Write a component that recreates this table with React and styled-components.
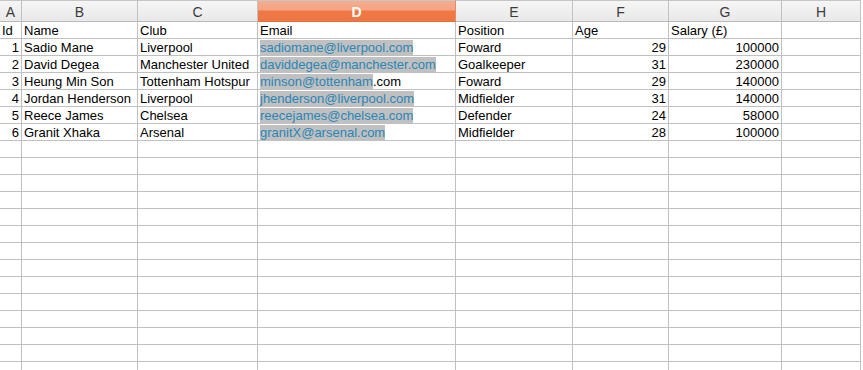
import React from 'react';
import styled, { createGlobalStyle } from 'styled-components';

const GlobalStyle = createGlobalStyle`
  html, body {
    margin: 0;
    padding: 0;
    background: #ffffff;
  }
  body {
    font-family: "Liberation Sans", Arial, sans-serif;
    overflow: hidden;
  }
`;

const widths = [22, 116, 120, 198, 117, 96, 113, 79];
const letters = ['A', 'B', 'C', 'D', 'E', 'F', 'G', 'H'];
const numeric = [false, false, false, false, false, true, true, false];

const rows = [
  ['Id', 'Name', 'Club', 'Email', 'Position', 'Age', 'Salary (£)'],
  [1, 'Sadio Mane', 'Liverpool', { link: 'sadiomane@liverpool.com' }, 'Foward', 29, 100000],
  [2, 'David Degea', 'Manchester United', { link: 'daviddegea@manchester.com' }, 'Goalkeeper', 31, 230000],
  [3, 'Heung Min Son', 'Tottenham Hotspur', { link: 'minson@tottenham', rest: '.com' }, 'Foward', 29, 140000],
  [4, 'Jordan Henderson', 'Liverpool', { link: 'jhenderson@liverpool.com' }, 'Midfielder', 31, 140000],
  [5, 'Reece James', 'Chelsea', { link: 'reecejames@chelsea.com' }, 'Defender', 24, 58000],
  [6, 'Granit Xhaka', 'Arsenal', { link: 'granitX@arsenal.com' }, 'Midfielder', 28, 100000],
];

const TOTAL_ROWS = 22;

export default function App() {
  const body = [];
  for (let r = 0; r < TOTAL_ROWS; r++) {
    const data = rows[r] || [];
    widths.forEach((w, c) => {
      const value = data[c];
      const right = typeof value === 'number' || (numeric[c] && r > 0 && value !== undefined);
      body.push(
        <Cell key={`${r}-${c}`} $align={right ? 'right' : 'left'}>
          {value && typeof value === 'object' ? (
            <>
              <Link>{value.link}</Link>
              {value.rest}
            </>
          ) : (
            value
          )}
        </Cell>
      );
    });
  }

  return (
    <>
      <GlobalStyle />
      <Sheet $cols={widths}>
        {letters.map((l, i) => (
          <HeaderCell key={l} $selected={l === 'D'}>
            {l}
          </HeaderCell>
        ))}
        {body}
      </Sheet>
    </>
  );
}

const Sheet = styled.div`
  display: grid;
  grid-template-columns: ${({ $cols }) => $cols.map((w) => `${w}px`).join(' ')};
  grid-auto-rows: 17px;
  grid-template-rows: 22px;
  width: 862px;
  height: 370px;
  overflow: hidden;
  font-size: 13px;
  color: #000000;
`;

const HeaderCell = styled.div`
  box-sizing: border-box;
  display: flex;
  align-items: center;
  justify-content: center;
  border-top: 1px solid #c6c6c6;
  border-right: 1px solid ${({ $selected }) => ($selected ? '#e98a62' : '#c2c2c2')};
  border-bottom: 1px solid ${({ $selected }) => ($selected ? '#e2703e' : '#b9b9b9')};
  font-size: 14px;
  padding-top: 1px;
  font-weight: ${({ $selected }) => ($selected ? 700 : 400)};
  color: ${({ $selected }) => ($selected ? '#ffffff' : '#3c3c3c')};
  background: ${({ $selected }) =>
    $selected
      ? 'linear-gradient(#f6ac8e 0%, #f5a383 45%, #ef7845 50%, #ee7642 100%)'
      : 'linear-gradient(#f6f6f6 0%, #efefef 50%, #e9e9e9 100%)'};
`;

const Cell = styled.div`
  box-sizing: border-box;
  border-right: 1px solid #c0c0c0;
  border-bottom: 1px solid #c0c0c0;
  padding: 0 2px;
  line-height: 17px;
  height: 17px;
  white-space: nowrap;
  overflow: visible;
  text-align: ${({ $align }) => $align};
`;

const Link = styled.span`
  color: #2a86b6;
  background: #c0c0c0;
`;
